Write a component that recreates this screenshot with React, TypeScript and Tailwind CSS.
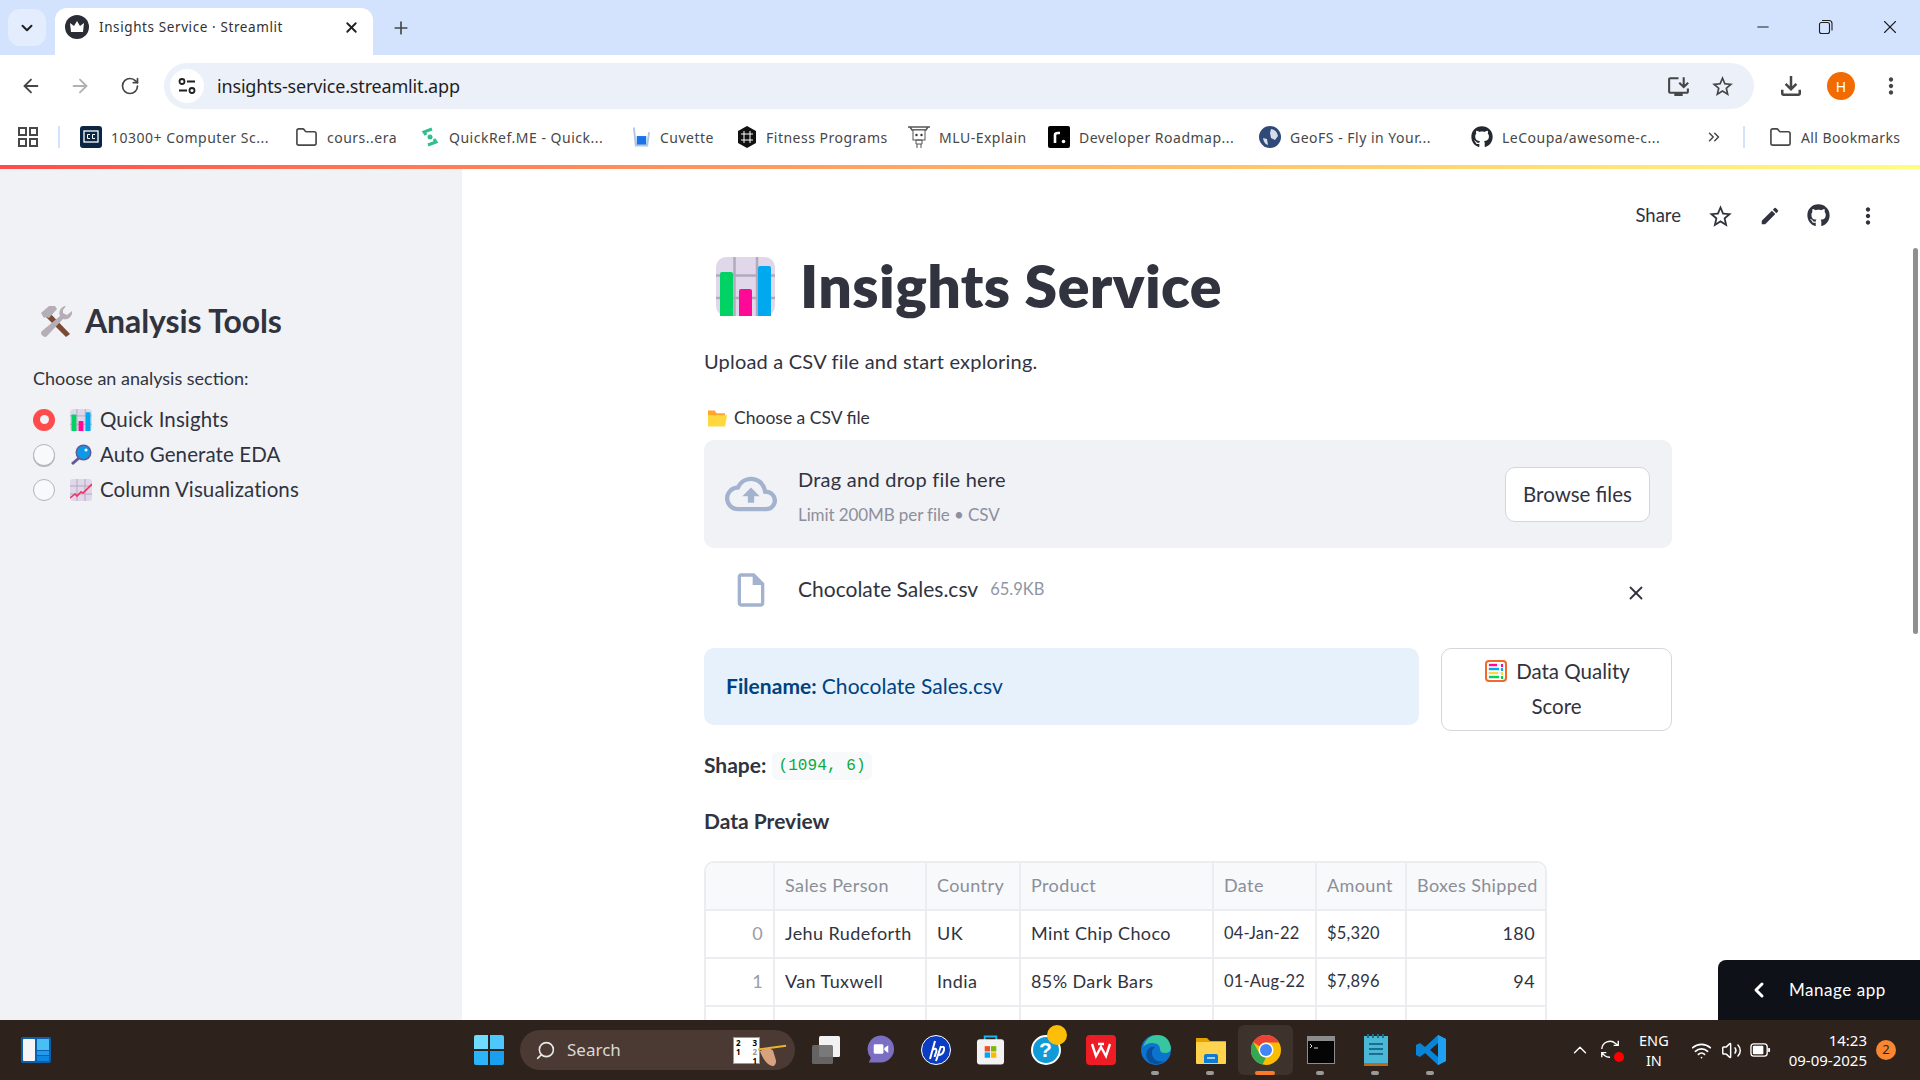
import React from 'react';
import { ArrowLeft, ArrowRight, RotateCw, ChevronDown, ChevronLeft, ChevronUp, ChevronsRight, Plus, X, Minus, Folder, Search, Wifi, Volume2 } from 'lucide-react';
import { MdOutlineCloudUpload, MdOutlineInsertDriveFile, MdEdit, MdOutlineStarBorder, MdOutlineInstallDesktop, MdMoreVert, MdOutlineFileDownload } from 'react-icons/md';
import { FaGithub } from 'react-icons/fa';

const BarEmoji = ({ className }: { className: string }) => (
  <svg viewBox="0 0 59 59" className={className}>
    <rect width="59" height="59" rx="10" fill="#e0d8ea" />
    <path d="M18.5 0v59M41 0v59M0 18.5h59M0 41h59" stroke="#b3a9bd" strokeWidth="2.5" />
    <path d="M4 17a2 2 0 0 1 2-2h9a2 2 0 0 1 2 2v42H4z" fill="#00d264" />
    <path d="M23 34a2 2 0 0 1 2-2h9a2 2 0 0 1 2 2v25H23z" fill="#ff0a96" />
    <path d="M42 11a2 2 0 0 1 2-2h9a2 2 0 0 1 2 2v48H42z" fill="#00a8f0" />
  </svg>
);

const ToolsEmoji = () => (
  <svg viewBox="0 0 34 34" className="w-[34px] h-[34px]">
    <path d="M9 7l22 23-4 3L5 11z" fill="#7a4a32" />
    <path d="M2 9l8-7h6l2 3-8 9-3-1-2 1z" fill="#b5adb8" />
    <path d="M27 2a7 7 0 0 0-6 10L3 27a3 3 0 0 0 1 5 3 3 0 0 0 4 0l16-17a7 7 0 0 0 9-8l-5 4-4-2V6z" fill="#b5adb8" />
  </svg>
);

const MagnifierEmoji = () => (
  <svg viewBox="0 0 22 22" className="w-[22px] h-[22px]">
    <path d="M8 13l-7 6 2 2 7-6z" fill="#5f5a96" />
    <circle cx="13.5" cy="8.5" r="8" fill="#5f5a96" />
    <circle cx="13.5" cy="8.5" r="6.5" fill="#0a9ae8" />
    <circle cx="16" cy="6" r="1.5" fill="#ffffff" />
  </svg>
);

const TrendEmoji = () => (
  <svg viewBox="0 0 22 22" className="w-[22px] h-[22px]">
    <rect width="22" height="22" rx="3" fill="#e0d8ea" />
    <path d="M7 0v22M15 0v22M0 7h22M0 15h22" stroke="#b3a9bd" strokeWidth="1" />
    <path d="M0 19l5-4 2 2 4-4 2 1 9-9" stroke="#f0305f" strokeWidth="1.6" fill="none" />
  </svg>
);

const FolderEmoji = () => (
  <svg viewBox="0 0 20 18" className="w-[19px] h-[18px]">
    <path d="M0 1h7l2 3h9v4H0z" fill="#ffa62b" />
    <path d="M0 18V6h20l-2 12z" fill="#ffd840" />
  </svg>
);

const AbacusEmoji = () => (
  <svg viewBox="0 0 22 22" className="w-[22px] h-[22px]">
    <rect x="1" y="1" width="20" height="20" rx="3" fill="#fff" stroke="#f4682a" strokeWidth="2" />
    <path d="M3 5h15M3 9h15M3 13h15M3 17h15" stroke="#dcdce0" strokeWidth="1" />
    <path d="M4 5h8" stroke="#ff0a96" strokeWidth="2.4" /><path d="M17 4v3" stroke="#ff0a96" strokeWidth="2" />
    <path d="M4 9h10" stroke="#00a8f0" strokeWidth="2.4" /><path d="M17 8v3" stroke="#00a8f0" strokeWidth="2" />
    <path d="M4 13h9" stroke="#ffd840" strokeWidth="2.4" /><path d="M17 12v3" stroke="#ffd840" strokeWidth="2" />
    <path d="M4 17h10" stroke="#00d264" strokeWidth="2.4" /><path d="M17 16v3" stroke="#00d264" strokeWidth="2" />
  </svg>
);

const Favicon = () => (
  <svg viewBox="0 0 24 24" className="w-6 h-6">
    <circle cx="12" cy="12" r="12" fill="#2b2d36" />
    <path d="M5 8l4 3 3-5 3 5 4-3-1 9H6z" fill="#fff" />
  </svg>
);

const SiteInfoIcon = () => (
  <svg viewBox="0 0 20 20" className="w-5 h-5" fill="none" stroke="#1f1f1f" strokeWidth="1.800">
    <circle cx="5" cy="5.500" r="2.500" />
    <path d="M10 5.500h8M2 14.500h8" />
    <circle cx="15" cy="14.500" r="2.500" />
  </svg>
);

const bookmarks: { label: string; icon: React.ReactNode; box: string }[] = [
  {
    label: '10300+ Computer Sc...',
    box: 'w-[215px]',
    icon: (
      <svg viewBox="0 0 22 22" className="w-[22px] h-[22px]">
        <rect width="22" height="22" rx="3" fill="#0b2545" />
        <rect x="4" y="5" width="14" height="11" fill="none" stroke="#fff" strokeWidth="1.3" />
        <path d="M10 8.5H7.5v4H10M15 8.5h-2.5v4H15" stroke="#fff" fill="none" />
      </svg>
    ),
  },
  { label: 'cours..era', box: 'w-[125px]', icon: <Folder size={23} strokeWidth={1.7} className="text-[#474747]" /> },
  {
    label: 'QuickRef.ME - Quick...',
    box: 'w-[212px]',
    icon: (
      <svg viewBox="0 0 20 20" className="w-5 h-5">
        <path d="M12 2l-8 3 2 3M8 18l8-3-2-3" stroke="#2fbf8f" strokeWidth="3" fill="none" />
        <circle cx="10" cy="10" r="2.5" fill="#2fbf8f" />
      </svg>
    ),
  },
  {
    label: 'Cuvette',
    box: 'w-[105px]',
    icon: (
      <svg viewBox="0 0 20 22" className="w-[19px] h-[22px]">
        <path d="M2 1l2 19h12l2-14" stroke="#b8c6dc" strokeWidth="2" fill="none" />
        <rect x="5" y="10" width="10" height="9" fill="#1a73e8" />
      </svg>
    ),
  },
  {
    label: 'Fitness Programs',
    box: 'w-[171px]',
    icon: (
      <svg viewBox="0 0 20 22" className="w-5 h-[22px]">
        <path d="M10 0l9 5v12l-9 5-9-5V5z" fill="#111" />
        <path d="M4 8h12M4 14h12M7 5v12M13 5v12" stroke="#fff" strokeWidth="1" />
      </svg>
    ),
  },
  {
    label: 'MLU-Explain',
    box: 'w-[140px]',
    icon: (
      <svg viewBox="0 0 22 24" className="w-[22px] h-6">
        <path d="M0 2h22M2 2l2 3h14l2-3" stroke="#555" strokeWidth="1.5" fill="none" />
        <rect x="5" y="5" width="12" height="10" fill="#fff" stroke="#555" />
        <circle cx="8.5" cy="10" r="1.2" fill="#333" /><circle cx="13.5" cy="10" r="1.2" fill="#333" />
        <path d="M8 15h6v4H8zM9 19v4M13 19v4" stroke="#555" fill="none" />
      </svg>
    ),
  },
  {
    label: 'Developer Roadmap...',
    box: 'w-[211px]',
    icon: (
      <svg viewBox="0 0 22 22" className="w-[22px] h-[22px]">
        <rect width="22" height="22" rx="2" fill="#000" />
        <path d="M7 17V9q0-2 3-2h2" stroke="#fff" strokeWidth="2.6" fill="none" />
        <circle cx="15.5" cy="15.5" r="1.8" fill="#fff" />
      </svg>
    ),
  },
  {
    label: 'GeoFS - Fly in Your...',
    box: 'w-[212px]',
    icon: (
      <svg viewBox="0 0 22 22" className="w-[22px] h-[22px]">
        <circle cx="11" cy="11" r="11" fill="#2f4a78" />
        <path d="M12 3q6 1 7 7l-3 4-4-2-1-5zM4 12l4 1 1 6q-4-1-5-7z" fill="#d7dde8" />
      </svg>
    ),
  },
  { label: 'LeCoupa/awesome-c...', box: 'w-[234px]', icon: <FaGithub size={22} className="text-[#24292f]" /> },
];

const taskIcons: { key: string; dot?: string; active?: boolean; icon: React.ReactNode }[] = [
  {
    key: 'tasks',
    icon: (
      <svg viewBox="0 0 32 32" className="w-8 h-8">
        <rect x="9" y="2" width="21" height="21" rx="1.5" fill="#f2f2f2" />
        <rect x="2" y="11" width="21" height="19" rx="1.5" fill="#6b6b6b" fillOpacity="0.9" />
      </svg>
    ),
  },
  {
    key: 'meet',
    icon: (
      <svg viewBox="0 0 30 32" className="w-[29px] h-8">
        <path d="M15 1a14 14 0 0 1 0 28H3l2-5A14 14 0 0 1 15 1z" fill="#7b6fc4" />
        <rect x="8" y="10" width="10" height="10" rx="1.5" fill="#fff" />
        <path d="M19 14l4-3v8l-4-3z" fill="#fff" />
      </svg>
    ),
  },
  {
    key: 'hp',
    icon: (
      <svg viewBox="0 0 30 30" className="w-[30px] h-[30px]">
        <circle cx="15" cy="15" r="14.5" fill="#0a3cc4" stroke="#fff" />
        <path d="M14 6l-5 18M20 11l-5 15M11.5 15q4-3 4 1l-2 6M19 13q5-3 4 2-1 5-6 5" stroke="#fff" strokeWidth="2" fill="none" />
      </svg>
    ),
  },
  {
    key: 'store',
    icon: (
      <svg viewBox="0 0 30 32" className="w-[29px] h-8">
        <path d="M9 6V2h12v4" stroke="#19b5e8" strokeWidth="2" fill="none" />
        <rect x="1" y="5" width="28" height="26" rx="3" fill="#f3f3f3" />
        <rect x="9" y="12" width="5.5" height="5.5" fill="#f25022" /><rect x="15.5" y="12" width="5.5" height="5.5" fill="#7fba00" />
        <rect x="9" y="18.5" width="5.5" height="5.5" fill="#00a4ef" /><rect x="15.5" y="18.5" width="5.5" height="5.5" fill="#ffb900" />
      </svg>
    ),
  },
  {
    key: 'help',
    icon: (
      <div className="relative w-[30px] h-[30px]">
        <div className="w-[30px] h-[30px] rounded-full bg-[#0e9bd8] border-2 border-white flex items-center justify-center text-white font-bold text-[21px] font-['Liberation_Sans',sans-serif]">?</div>
        <div className="absolute -top-[10px] left-[16px] w-5 h-5 rounded-full bg-[#fcbe07]" />
      </div>
    ),
  },
  {
    key: 'wps',
    icon: (
      <svg viewBox="0 0 30 30" className="w-[30px] h-[30px]">
        <rect width="30" height="30" rx="4" fill="#ee1c25" />
        <path d="M6 9l4 12 5-9 5 9 4-12M12 9h6" stroke="#fff" strokeWidth="2.4" fill="none" />
      </svg>
    ),
  },
  {
    key: 'edge',
    dot: 'bg-[#9a9a9a]',
    icon: (
      <svg viewBox="0 0 30 30" className="w-[30px] h-[30px]">
        <circle cx="15" cy="15" r="15" fill="#0c74cf" />
        <path d="M2 12Q6 0 16 0q12 0 14 13 0 5-6 5-5 0-5-4 0-6-8-6-5 0-9 4z" fill="#38c6a0" />
        <path d="M24 26q-7 5-14 2-7-5-4-12 3-5 8-4-5 4-2 10 3 6 12 4z" fill="#0a4f9c" />
      </svg>
    ),
  },
  {
    key: 'files',
    dot: 'bg-[#9a9a9a]',
    icon: (
      <svg viewBox="0 0 30 30" className="w-[30px] h-[30px]">
        <path d="M0 3h11l3 3h16v6H0z" fill="#e4a100" />
        <rect y="7" width="30" height="22" rx="1" fill="#ffd34e" />
        <path d="M8 28v-7q0-2 2-2h10q2 0 2 2v7z" fill="#0f7ad1" />
        <path d="M11 23h8" stroke="#cdeafc" strokeWidth="1.5" />
      </svg>
    ),
  },
  {
    key: 'chrome',
    active: true,
    icon: (
      <svg viewBox="0 0 30 30" className="w-[30px] h-[30px]">
        <circle cx="15" cy="15" r="15" fill="#fbbc04" />
        <path d="M15 0a15 15 0 0 1 13 7.5H15A7.5 7.5 0 0 0 8.5 11.2L2 7A15 15 0 0 1 15 0z" fill="#ea4335" />
        <path d="M2 7l6.500 11.500A7.500 7.500 0 0 0 15 22.500L11.500 29.600A15 15 0 0 1 2 7z" fill="#34a853" />
        <circle cx="15" cy="15" r="7.500" fill="#fff" />
        <circle cx="15" cy="15" r="6" fill="#4285f4" />
      </svg>
    ),
  },
  {
    key: 'terminal',
    dot: 'bg-[#9a9a9a]',
    icon: (
      <svg viewBox="0 0 28 28" className="w-7 h-7">
        <rect width="28" height="28" fill="#8c8c8c" />
        <rect x="1" y="5" width="26" height="22" fill="#050505" />
        <path d="M3 8l2 2-2 2M7 12h4" stroke="#ddd" fill="none" />
      </svg>
    ),
  },
  {
    key: 'notepad',
    dot: 'bg-[#9a9a9a]',
    icon: (
      <svg viewBox="0 0 24 32" className="w-6 h-8">
        <rect y="2" width="24" height="29" fill="#4cb8d8" />
        <path d="M0 29h24v3H0z" fill="#b86a25" />
        <path d="M4 0v4M9 0v4M14 0v4M19 0v4" stroke="#1b6f8c" strokeWidth="2" />
        <path d="M5 10h14M5 15h14M5 20h14" stroke="#1b6f8c" strokeWidth="2" />
      </svg>
    ),
  },
  {
    key: 'vscode',
    dot: 'bg-[#9a9a9a]',
    icon: (
      <svg viewBox="0 0 30 30" className="w-[30px] h-[30px]">
        <path d="M22 0l8 4v22l-8 4-13-12-5 4-4-2v-10l4-2 5 4zM22 8l-8 7 8 7z" fill="#0a84d6" />
        <path d="M22 0l8 4v22l-8 4z" fill="#1fa0f0" />
      </svg>
    ),
  },
];

const columns = ['', 'Sales Person', 'Country', 'Product', 'Date', 'Amount', 'Boxes Shipped'];
const rows = [
  ['0', 'Jehu Rudeforth', 'UK', 'Mint Chip Choco', '04-Jan-22', '$5,320', '180'],
  ['1', 'Van Tuxwell', 'India', '85% Dark Bars', '01-Aug-22', '$7,896', '94'],
  ['', '', '', '', '', '', ''],
];

const App: React.FC = () => {
  return (
    <div className="w-[1920px] h-[1080px] flex flex-col overflow-hidden bg-white font-['Lato',sans-serif] text-[#31333f]">
      {/* tab strip */}
      <div className="h-[55px] shrink-0 bg-[#d3e3fd] flex items-end pl-2 font-['Noto_Sans',sans-serif]">
        <div className="self-start mt-[9px] w-[38px] h-[37px] rounded-xl bg-[#e3edfd] flex items-center justify-center">
          <ChevronDown size={18} strokeWidth={2.6} className="text-[#1f1f1f]" />
        </div>
        <div className="ml-[9px] w-[318px] h-[47px] bg-white rounded-t-xl flex items-center pl-[10px] pb-[9px]">
          <Favicon />
          <span className="ml-[10px] w-[240px] text-[13.5px] tracking-[0.6px] text-[#303134]">Insights Service · Streamlit</span>
          <X size={17} strokeWidth={2.6} className="text-[#1f1f1f] ml-[4px]" />
        </div>
        <div className="self-start mt-[18px] ml-[18px]">
          <Plus size={20} strokeWidth={2} className="text-[#444746]" />
        </div>
        <div className="ml-auto self-start flex items-center h-[54px] text-[#1f1f1f]">
          <Minus size={18} strokeWidth={1.4} className="mr-[46px]" />
          <svg viewBox="0 0 16 16" className="w-4 h-4 mr-[45px]" fill="none" stroke="currentColor" strokeWidth="1.100">
            <rect x="1.500" y="3.500" width="10" height="11" rx="2" />
            <path d="M4 1.500h7q3 0 3 3v7" />
          </svg>
          <X size={22} strokeWidth={1.2} className="mr-[19px]" />
        </div>
      </div>

      {/* toolbar */}
      <div className="h-[54px] shrink-0 bg-white flex items-start pt-2 rounded-t-lg text-[#444746]">
        <ArrowLeft size={22} strokeWidth={2} className="ml-[20px] mt-3" />
        <ArrowRight size={22} strokeWidth={2} className="ml-[27px] mt-3 text-[#b0b1b3]" />
        <RotateCw size={20} strokeWidth={2} className="ml-[29px] mt-[13px]" />
        <div className="ml-[24px] w-[1590px] h-[46px] rounded-full bg-[#ecf0f9] flex items-center pl-[6px] pr-[19px] font-['Noto_Sans',sans-serif]">
          <div className="w-[34px] h-[34px] rounded-full bg-white flex items-center justify-center">
            <SiteInfoIcon />
          </div>
          <span className="ml-[13px] text-[18px] tracking-[-0.17px] text-[#1f1f1f]">insights-service.streamlit.app</span>
          <MdOutlineInstallDesktop size={25} className="ml-auto" />
          <MdOutlineStarBorder size={25} className="ml-[19px]" />
        </div>
        <MdOutlineFileDownload size={30} className="ml-[22px] mt-2" />
        <div className="ml-[21px] mt-[9px] w-7 h-7 rounded-full bg-[#f26b00] text-white text-[14px] flex items-center justify-center font-['Noto_Sans',sans-serif]">H</div>
        <MdMoreVert size={26} className="ml-[23px] mt-[10px]" />
      </div>

      {/* bookmarks bar */}
      <div className="h-[56px] shrink-0 bg-white flex items-center font-['Noto_Sans',sans-serif] text-[14px] tracking-[0.5px] text-[#474747]">
        <svg viewBox="0 0 20 20" className="w-5 h-5 ml-[18px]" fill="none" stroke="#474747" strokeWidth="2">
          <rect x="1" y="1" width="7" height="7" /><rect x="12" y="1" width="7" height="7" />
          <rect x="1" y="12" width="7" height="7" /><rect x="12" y="12" width="7" height="7" />
        </svg>
        <div className="ml-[20px] w-[2px] h-[22px] bg-[#d3e3fd]" />
        <div className="ml-[20px] flex">
          {bookmarks.map((b) => (
            <div key={b.label} className={`${b.box} shrink-0 flex items-center gap-[9px] whitespace-nowrap`}>
              {b.icon}
              <span>{b.label}</span>
            </div>
          ))}
        </div>
        <ChevronsRight size={18} strokeWidth={2} />
        <div className="ml-[20px] w-[2px] h-[22px] bg-[#d3e3fd]" />
        <Folder size={23} strokeWidth={1.7} className="ml-[24px]" />
        <span className="ml-[9px] whitespace-nowrap tracking-[0.4px]">All Bookmarks</span>
      </div>

      {/* streamlit decoration */}
      <div className="h-[4px] shrink-0 bg-gradient-to-r from-[#ff4b4b] to-[#fffd80]" />

      <div className="flex-1 min-h-0 flex">
        {/* sidebar */}
        <aside className="w-[462px] shrink-0 bg-[#f0f2f6] pl-[33px] pt-[135px]">
          <div className="flex items-center h-[34px] pl-[6px] gap-[12px]">
            <ToolsEmoji />
            <h2 className="text-[32px] font-bold tracking-[-0.1px]">Analysis Tools</h2>
          </div>
          <p className="mt-[28px] h-6 leading-6 text-[18px]">Choose an analysis section:</p>
          <div className="mt-[12px] text-[20.5px] tracking-[0.1px]">
            <div className="h-[35px] flex items-center">
              <div className="w-[22px] h-[22px] rounded-full bg-[#ff4b4b] flex items-center justify-center">
                <div className="w-[9px] h-[9px] rounded-full bg-[#f0f2f6]" />
              </div>
              <BarEmoji className="ml-[15px] w-[22px] h-[22px]" />
              <span className="ml-2">Quick Insights</span>
            </div>
            <div className="h-[35px] flex items-center">
              <div className="w-[22px] h-[22px] rounded-full bg-[#f8f9fb] border border-[#b4b5bb] shadow-[0_1px_0_#b4b5bb]" />
              <div className="ml-[15px]"><MagnifierEmoji /></div>
              <span className="ml-2">Auto Generate EDA</span>
            </div>
            <div className="h-[35px] flex items-center">
              <div className="w-[22px] h-[22px] rounded-full bg-[#f8f9fb] border border-[#b4b5bb]" />
              <div className="ml-[15px]"><TrendEmoji /></div>
              <span className="ml-2">Column Visualizations</span>
            </div>
          </div>
        </aside>

        {/* main */}
        <main className="relative flex-1 min-w-0 overflow-hidden">
          <header className="h-[87px] flex items-start justify-end pt-[34px] text-[#31333f]">
            <span className="text-[18.5px] leading-[26px] -mt-[1px] mr-[26px]">Share</span>
            <MdOutlineStarBorder size={27} className="mr-[25px]" />
            <MdEdit size={22} className="mr-[26px] mt-[2px]" />
            <FaGithub size={23} className="mr-[25px] mt-[1px]" />
            <MdMoreVert size={26} className="mr-[39px]" />
          </header>

          <div className="ml-[242px] w-[968px]">
            <div className="h-[60px] flex items-center pl-3 gap-[25px]">
              <BarEmoji className="w-[59px] h-[59px]" />
              <h1 className="text-[59px] font-extrabold tracking-[0.4px] leading-none -mt-[2px]">Insights Service</h1>
            </div>
            <p className="mt-[31px] h-7 leading-7 text-[20px] tracking-[0.2px]">Upload a CSV file and start exploring.</p>
            <div className="mt-[31px] h-6 flex items-center pl-1 gap-[7px] text-[17.5px]">
              <FolderEmoji />
              <span>Choose a CSV file</span>
            </div>

            <div className="mt-[10px] h-[108px] rounded-[10px] bg-[#f0f2f6] flex items-center pl-[21px] pr-[22px]">
              <MdOutlineCloudUpload size={52} className="text-[#a3b2ce]" />
              <div className="ml-[21px] pt-[3px]">
                <div className="text-[20px] leading-7 tracking-[0.25px]">Drag and drop file here</div>
                <div className="mt-[10px] text-[17px] leading-6 tracking-[-0.1px] text-[#8d8f9b]">Limit 200MB per file • CSV</div>
              </div>
              <button className="ml-auto w-[145px] h-[55px] rounded-[10px] border border-[#d5d6db] bg-white text-[20.5px]">Browse files</button>
            </div>

            <div className="mt-[18px] h-12 flex items-center pl-[27px]">
              <MdOutlineInsertDriveFile size={40} className="text-[#a3b2ce]" />
              <span className="ml-[27px] -mt-[2px] text-[21px]">Chocolate Sales.csv</span>
              <span className="ml-[12px] -mt-[1px] text-[16.5px] text-[#9095a3]">65.9KB</span>
              <X size={22} strokeWidth={2} className="ml-auto mr-[25px] mt-[5px] text-[#31333f]" />
            </div>

            <div className="mt-[34px] flex items-start gap-[22px]">
              <div className="w-[715px] h-[77px] rounded-[10px] bg-[#e6f1fb] flex items-center pl-[22px] pb-[2px] text-[21px] tracking-[0.05px] text-[#004280]">
                <span className="font-bold">Filename:</span>
                <span className="ml-[5px]">Chocolate Sales.csv</span>
              </div>
              <button className="w-[231px] h-[83px] rounded-[10px] border border-[#d5d6db] bg-white text-[20.5px] leading-[35px] pb-[2px]">
                <span className="flex items-center justify-center gap-[9px] pl-[2px]"><AbacusEmoji />Data Quality</span>
                <span className="block">Score</span>
              </button>
            </div>

            <div className="mt-[21px] h-7 flex items-center text-[21px]">
              <span className="font-bold -mt-[3px]">Shape:</span>
              <code className="ml-[6px] h-7 px-[6px] rounded-md bg-[#f8f9fb] flex items-center text-[16px] tracking-[0.1px] text-[#09ab3b] font-['Liberation_Mono',monospace]">(1094, 6)</code>
            </div>

            <h3 className="mt-[27px] h-7 leading-7 text-[21px] font-bold">Data Preview</h3>

            <div className="mt-[26px] w-[843px] rounded-t-[10px] border-2 border-[#ebedf1] overflow-hidden grid grid-cols-[69px_152px_94px_193px_103px_90px_138px] text-[18px] tracking-[0.4px]">
              {columns.map((c, i) => (
                <div key={i} className={`h-[48px] pb-[2px] bg-[#f8f9fb] border-b-2 border-[#ebedf1] px-[10px] flex items-center text-[#8b8e99] whitespace-nowrap ${i < 6 ? 'border-r-2' : ''}`}>
                  {c}
                </div>
              ))}
              {rows.map((r, ri) =>
                r.map((v, i) => (
                  <div
                    key={`${ri}-${i}`}
                    className={`h-[48px] pb-[2px] border-b-2 border-[#ebedf1] px-[10px] flex items-center whitespace-nowrap ${i < 6 ? 'border-r-2' : ''} ${i === 0 ? 'justify-end text-[#9a9ca6]' : i === 6 ? 'justify-end' : ''} ${i === 4 || i === 5 ? 'text-[16.5px] tracking-[0.2px]' : ''}`}
                  >
                    {v}
                  </div>
                ))
              )}
            </div>
          </div>

          {/* scrollbar + manage app sit over the page */}
          <div className="absolute top-[79px] right-[2px] w-[5px] h-[386px] rounded-full bg-[#8f8f8f]" />
          <div className="absolute bottom-0 right-0 w-[202px] h-[60px] rounded-tl-lg bg-[#0e1117] text-white flex items-center pl-[29px]">
            <ChevronLeft size={24} strokeWidth={3} />
            <span className="ml-[18px] text-[17px] tracking-[0.55px]">Manage app</span>
          </div>
        </main>
      </div>

      {/* windows taskbar */}
      <footer className="h-[60px] shrink-0 bg-[#2e221c] flex items-center text-white font-['Noto_Sans',sans-serif]">
        <svg viewBox="0 0 30 26" className="ml-[21px] w-[30px] h-[26px]">
          <rect width="30" height="26" rx="2" fill="#0f5fa8" />
          <rect x="2" y="2" width="12" height="22" rx="1" fill="#f5f5f5" />
          <rect x="16" y="2" width="12" height="11" fill="#48c0f5" />
          <rect x="16" y="14" width="12" height="4" fill="#1f9cf0" />
          <rect x="16" y="19" width="12" height="5" fill="#0f86e0" />
        </svg>
        <svg viewBox="0 0 30 30" className="ml-[423px] w-[30px] h-[30px]">
          <path d="M0 2q0-2 2-2h12v14H0z" fill="#6fdcff" />
          <path d="M16 0h12q2 0 2 2v12H16z" fill="#4cc8fb" />
          <path d="M0 16h14v14H2q-2 0-2-2z" fill="#2db4f8" />
          <path d="M16 16h14v12q0 2-2 2H16z" fill="#1a9ff0" />
        </svg>
        <div className="ml-[16px] w-[275px] h-[40px] rounded-full bg-[#4a3a33] flex items-center pl-[15px] relative">
          <Search size={21} strokeWidth={1.8} className="-scale-x-100 text-[#e8e8e8]" />
          <span className="ml-[11px] text-[17px] text-[#dcd8d5]">Search</span>
          <div className="absolute left-[213px] top-[7px] w-[27px] h-[27px] bg-white grid grid-cols-3 text-[8px] leading-[9px] text-black text-center font-bold border border-[#999]">
            <span>2</span><span /><span>3</span><span>1</span><span /><span className="text-[#999]">2</span><span /><span /><span>1</span>
          </div>
          <svg viewBox="0 0 34 30" className="absolute left-[236px] top-[12px] w-[34px] h-[28px]">
            <path d="M1 8l30-4" stroke="#f0b429" strokeWidth="2" />
            <path d="M3 10q8-6 14-1l3 10q1 5-3 7-8-1-14-16z" fill="#d9a27f" />
          </svg>
        </div>
        <div className="ml-[3px] flex">
          {taskIcons.map((t) => (
            <div key={t.key} className={`relative w-[55px] h-[50px] flex items-center justify-center rounded-md ${t.active ? 'bg-[#3e322c]' : ''}`}>
              {t.icon}
              {t.dot && <div className={`absolute bottom-0 left-[23px] w-2 h-[4px] rounded-full ${t.dot}`} />}
              {t.active && <div className="absolute bottom-0 left-[17px] w-5 h-[4px] rounded-full bg-[#fa7a2c]" />}
            </div>
          ))}
        </div>
        <div className="ml-auto flex items-center">
          <ChevronUp size={22} strokeWidth={1.5} />
          <div className="relative ml-[8px] w-[22px] h-[24px]">
            <svg viewBox="0 0 24 24" className="w-[22px] h-[22px]" fill="none" stroke="currentColor" strokeWidth="1.500">
              <path d="M3 12a9 9 0 0 1 15-6l3 2M21 3v5h-5" />
              <path d="M3 21v-5h5M3 16l3 3a9 9 0 0 0 6 2" />
            </svg>
            <div className="absolute right-[-3px] bottom-0 w-[10px] h-[10px] rounded-full bg-[#ff0000]" />
          </div>
          <div className="ml-[18px] text-[14.5px] leading-[20px] text-center">ENG<br />IN</div>
          <Wifi size={21} strokeWidth={2} className="ml-[22px]" />
          <Volume2 size={21} strokeWidth={1.7} className="ml-[9px]" />
          <svg viewBox="0 0 22 16" className="ml-[8px] w-[21px] h-[16px]" fill="none">
            <rect x="1" y="1.500" width="17" height="13" rx="3" stroke="#fff" strokeWidth="1.400" />
            <rect x="3" y="3.500" width="11" height="9" rx="1" fill="#fff" />
            <path d="M20 6v4" stroke="#fff" strokeWidth="2" />
          </svg>
          <div className="ml-[18px] text-[15px] leading-[20px] text-right">14:23<br />09-09-2025</div>
          <div className="ml-[9px] mr-[24px] w-5 h-5 rounded-full bg-[#fa8632] text-[#2e221c] text-[13px] flex items-center justify-center">2</div>
        </div>
      </footer>
    </div>
  );
};

export default App;
